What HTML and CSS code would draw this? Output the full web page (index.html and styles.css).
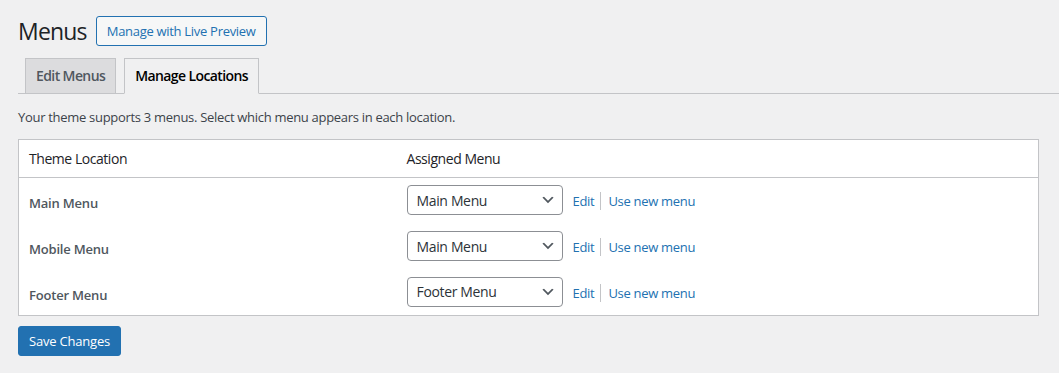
FILE: index.html
```html
<!DOCTYPE html>
<html lang="en">
<head>
    <meta charset="UTF-8">
    <title>Menus</title>
    <link rel="stylesheet" href="styles.css">
</head>
<body>

<div class="wrap">
    <div class="title_row">
        <h1>Menus</h1>
        <a class="live_btn" href="#">Manage with Live Preview</a>
    </div>

    <nav class="tabs">
        <a class="tab" href="#">Edit Menus</a>
        <a class="tab active" href="#">Manage Locations</a>
    </nav>

    <p class="intro">Your theme supports 3 menus. Select which menu appears in each location.</p>

    <table class="locations">
        <thead>
            <tr>
                <th class="col_loc">Theme Location</th>
                <th>Assigned Menu</th>
            </tr>
        </thead>
        <tbody>
            <tr>
                <td class="loc_title">Main Menu</td>
                <td>
                    <div class="assign">
                        <div class="select">Main Menu
                            <svg width="16" height="16" viewBox="0 0 20 20"><path d="M5 6l5 5 5-5 2 1-7 7-7-7 2-1z" fill="#50575e"/></svg>
                        </div>
                        <a href="#">Edit</a><span class="sep"></span><a href="#">Use new menu</a>
                    </div>
                </td>
            </tr>
            <tr>
                <td class="loc_title">Mobile Menu</td>
                <td>
                    <div class="assign">
                        <div class="select">Main Menu
                            <svg width="16" height="16" viewBox="0 0 20 20"><path d="M5 6l5 5 5-5 2 1-7 7-7-7 2-1z" fill="#50575e"/></svg>
                        </div>
                        <a href="#">Edit</a><span class="sep"></span><a href="#">Use new menu</a>
                    </div>
                </td>
            </tr>
            <tr>
                <td class="loc_title">Footer Menu</td>
                <td>
                    <div class="assign">
                        <div class="select">Footer Menu
                            <svg width="16" height="16" viewBox="0 0 20 20"><path d="M5 6l5 5 5-5 2 1-7 7-7-7 2-1z" fill="#50575e"/></svg>
                        </div>
                        <a href="#">Edit</a><span class="sep"></span><a href="#">Use new menu</a>
                    </div>
                </td>
            </tr>
        </tbody>
    </table>

    <button class="save_btn" type="button">Save Changes</button>
</div>

</body>
</html>
```

FILE: styles.css
```css
* {
    box-sizing: border-box;
}
body {
    margin: 0;
    background: #f0f0f1;
    color: #3c434a;
    font-family: "Open Sans", sans-serif;
    font-size: 13px;
    letter-spacing: -0.3px;
}
a {
    color: #2271b1;
    text-decoration: none;
}
.wrap {
    padding: 16px 0 0 18px;
}
.title_row {
    display: flex;
    align-items: center;
    gap: 9px;
    padding-right: 20px;
}
h1 {
    margin: 0;
    font-size: 23px;
    font-weight: 400;
    color: #1d2327;
    line-height: 29px;
    letter-spacing: -0.8px;
}
.live_btn {
    height: 30px;
    padding: 0 10px;
    border: 1px solid #2271b1;
    border-radius: 3px;
    background: #f6f7f7;
    font-size: 13px;
    line-height: 28px;
}
.tabs {
    display: flex;
    gap: 8px;
    margin-top: 12px;
    padding-left: 7px;
    border-bottom: 1px solid #c3c4c7;
}
.tab {
    margin-bottom: -1px;
    padding: 0 10px;
    height: 36px;
    line-height: 34px;
    border: 1px solid #c3c4c7;
    background: #dcdcde;
    color: #50575e;
    font-size: 14px;
    font-weight: 600;
    letter-spacing: -0.6px;
}
.tab.active {
    background: #f0f0f1;
    border-bottom-color: #f0f0f1;
    color: #000;
}
.intro {
    margin: 14px 0 13px;
    line-height: 18px;
}
.locations {
    width: 1021px;
    border-collapse: collapse;
    background: #fff;
    border: 1px solid #c3c4c7;
}
.locations th {
    text-align: left;
    font-weight: 400;
    font-size: 14px;
    color: #1d2327;
    height: 38px;
    padding: 0 10px;
    border-bottom: 1px solid #c3c4c7;
    letter-spacing: -0.45px;
}
.col_loc {
    width: 378px;
}
.locations td {
    padding: 0 10px 1px;
    height: 46px;
    vertical-align: middle;
}
.locations td.loc_title {
    padding-top: 5px;
    padding-bottom: 0;
    font-weight: 600;
    color: #50575e;
    font-size: 13px;
    letter-spacing: -0.2px;
}
.assign {
    display: flex;
    align-items: center;
}
.assign a {
    padding-top: 2px;
}
.select {
    display: flex;
    align-items: center;
    justify-content: space-between;
    width: 156px;
    height: 30px;
    margin-right: 10px;
    padding: 0 6px 0 9px;
    border: 1px solid #8c8f94;
    border-radius: 4px;
    color: #2c3338;
    font-size: 14px;
    letter-spacing: -0.35px;
}
.sep {
    width: 1px;
    height: 18px;
    margin: 2px 7px 0 6px;
    background: #c3c4c7;
}
.save_btn {
    margin-top: 10px;
    height: 30px;
    padding: 0 10px;
    border: 1px solid #2271b1;
    border-radius: 3px;
    background: #2271b1;
    color: #fff;
    font-family: "Open Sans", sans-serif;
    font-size: 13px;
    letter-spacing: -0.2px;
}
```
